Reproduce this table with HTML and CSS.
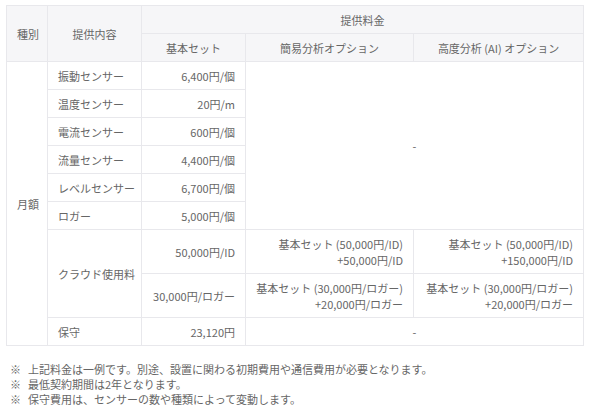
FILE: index.html
```html
<!DOCTYPE html>
<html lang="ja">
<head>
<meta charset="utf-8">
<link rel="stylesheet" href="styles.css">
</head>
<body>
<div class="page">
<table class="price">
  <colgroup>
    <col class="c1"><col class="c2"><col class="c3"><col class="c4"><col class="c5">
  </colgroup>
  <thead>
    <tr>
      <th rowspan="2">種別</th>
      <th rowspan="2">提供内容</th>
      <th colspan="3">提供料金</th>
    </tr>
    <tr>
      <th>基本セット</th>
      <th>簡易分析オプション</th>
      <th>高度分析 (AI) オプション</th>
    </tr>
  </thead>
  <tbody>
    <tr>
      <td rowspan="9" class="center">月額</td>
      <td>振動センサー</td>
      <td class="num">6,400円/個</td>
      <td rowspan="6" colspan="2" class="center">-</td>
    </tr>
    <tr><td>温度センサー</td><td class="num">20円/m</td></tr>
    <tr><td>電流センサー</td><td class="num">600円/個</td></tr>
    <tr><td>流量センサー</td><td class="num">4,400円/個</td></tr>
    <tr><td>レベルセンサー</td><td class="num">6,700円/個</td></tr>
    <tr><td>ロガー</td><td class="num">5,000円/個</td></tr>
    <tr>
      <td rowspan="2">クラウド使用料</td>
      <td class="num">50,000円/ID</td>
      <td class="num">基本セット (50,000円/ID)<br>+50,000円/ID</td>
      <td class="num">基本セット (50,000円/ID)<br>+150,000円/ID</td>
    </tr>
    <tr>
      <td class="num">30,000円/ロガー</td>
      <td class="num">基本セット (30,000円/ロガー)<br>+20,000円/ロガー</td>
      <td class="num">基本セット (30,000円/ロガー)<br>+20,000円/ロガー</td>
    </tr>
    <tr>
      <td>保守</td>
      <td class="num">23,120円</td>
      <td colspan="2" class="center">-</td>
    </tr>
  </tbody>
</table>
<ul class="notes">
  <li><span class="mark">※</span><span>上記料金は一例です。別途、設置に関わる初期費用や通信費用が必要となります。</span></li>
  <li><span class="mark">※</span><span>最低契約期間は2年となります。</span></li>
  <li><span class="mark">※</span><span>保守費用は、センサーの数や種類によって変動します。</span></li>
</ul>
</div>
</body>
</html>
```
FILE: styles.css
```css
html, body {
  margin: 0;
  padding: 0;
  background: #ffffff;
}
.page {
  padding: 5px 7px 0 6px;
  font-family: "Noto Sans CJK JP", "Noto Sans", sans-serif;
  font-size: 11px;
  color: #666666;
}
.price {
  width: 577px;
  border-collapse: collapse;
  table-layout: fixed;
}
.c1 { width: 41px; }
.c2 { width: 94px; }
.c3 { width: 104px; }
.c4 { width: 168px; }
.c5 { width: 170px; }
.price th,
.price td {
  border: 1px solid #e8e8ec;
  padding: 6px 10px 5px;
  line-height: 16px;
  font-weight: normal;
  vertical-align: middle;
  white-space: nowrap;
}
.price th {
  background: #f6f6f8;
  text-align: center;
}
.price td {
  text-align: left;
}
.price td.num {
  text-align: right;
}
.price td.center {
  text-align: center;
}
.notes {
  list-style: none;
  margin: 16px 0 0;
  padding: 0 0 0 4px;
  font-size: 11px;
  line-height: 15px;
}
.notes li {
  display: flex;
}
.notes .mark {
  width: 18px;
  flex: none;
}
```
